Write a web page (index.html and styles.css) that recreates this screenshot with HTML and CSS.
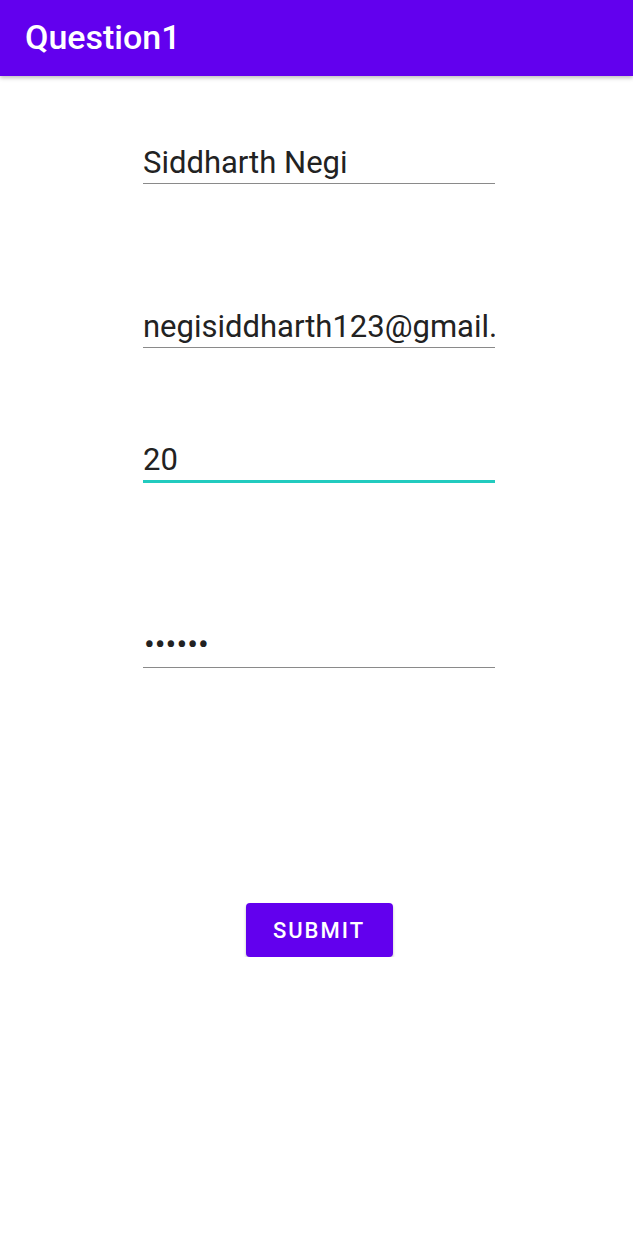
FILE: index.html
```html
<!DOCTYPE html>
<html>
<head>
<meta charset="utf-8">
<link rel="stylesheet" href="styles.css">
</head>
<body>
<header class="appbar"><h1 class="title">Question1</h1></header>
<main class="form">
  <div class="field field-name"><span class="value">Siddharth Negi</span></div>
  <div class="field field-email"><span class="value">negisiddharth123@gmail.com</span></div>
  <div class="field field-age focused"><span class="value">20</span></div>
  <div class="field field-pass"><span class="value dots">••••••</span></div>
  <div class="actions"><button class="submit">SUBMIT</button></div>
</main>
</body>
</html>
```
FILE: styles.css
```css
html, body {
  margin: 0;
  padding: 0;
  background: #ffffff;
  font-family: Roboto, "Noto Sans", sans-serif;
}
.appbar {
  height: 76px;
  background: #6200ee;
  box-shadow: 0 2px 4px rgba(0,0,0,0.25);
  display: flex;
  align-items: center;
  padding-left: 25px;
  position: relative;
  z-index: 1;
}
.title {
  margin: 0;
  color: #ffffff;
  font-size: 34px;
  font-weight: 500;
  letter-spacing: 0;
  position: relative;
  top: -1px;
}
.form {
  display: flex;
  flex-direction: column;
  padding-left: 143px;
}
.field {
  width: 352px;
  height: 40px;
  border-bottom: 1px solid #8a8a8a;
  white-space: nowrap;
  font-size: 31px;
  line-height: 40px;
  color: #222222;
}
.field-name { margin-top: 67px; }
.field-email { margin-top: 123px; overflow: hidden; }
.field-age { margin-top: 92px; }
.field-pass { margin-top: 144px; }
.focused { border-bottom: 3px solid #22cbbf; }
.dots {
  font-size: 32px;
  line-height: 40px;
  letter-spacing: 0;
  position: relative;
  top: -3px;
  padding-left: 1px;
}
.actions {
  margin-top: 235px;
  width: 352px;
  display: flex;
  justify-content: center;
}
.submit {
  width: 147px;
  height: 54px;
  border: none;
  border-radius: 4px;
  background: #6200ee;
  color: #ffffff;
  font-family: Roboto, sans-serif;
  font-size: 22px;
  font-weight: 500;
  letter-spacing: 2px;
  padding: 0;
  box-shadow: 0 2px 3px rgba(0,0,0,0.25);
}
```
